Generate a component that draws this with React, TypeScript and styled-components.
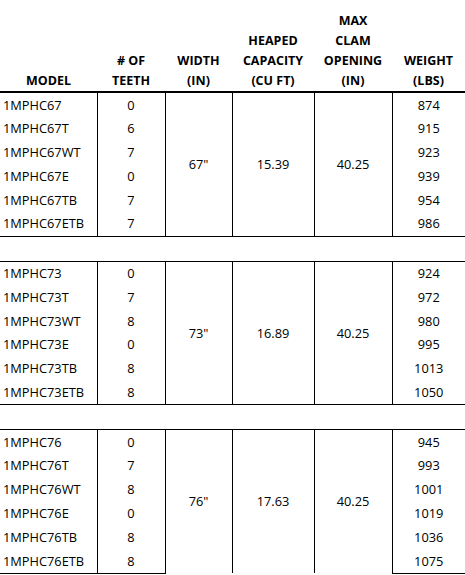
import React from 'react';
import styled, { createGlobalStyle } from 'styled-components';

/**
 * Data
 */
type Group = {
  width: string;
  capacity: string;
  opening: string;
  rows: [string, string, string][];
};

const groups: Group[] = [
  {
    width: '67"',
    capacity: '15.39',
    opening: '40.25',
    rows: [
      ['1MPHC67', '0', '874'],
      ['1MPHC67T', '6', '915'],
      ['1MPHC67WT', '7', '923'],
      ['1MPHC67E', '0', '939'],
      ['1MPHC67TB', '7', '954'],
      ['1MPHC67ETB', '7', '986'],
    ],
  },
  {
    width: '73"',
    capacity: '16.89',
    opening: '40.25',
    rows: [
      ['1MPHC73', '0', '924'],
      ['1MPHC73T', '7', '972'],
      ['1MPHC73WT', '8', '980'],
      ['1MPHC73E', '0', '995'],
      ['1MPHC73TB', '8', '1013'],
      ['1MPHC73ETB', '8', '1050'],
    ],
  },
  {
    width: '76"',
    capacity: '17.63',
    opening: '40.25',
    rows: [
      ['1MPHC76', '0', '945'],
      ['1MPHC76T', '7', '993'],
      ['1MPHC76WT', '8', '1001'],
      ['1MPHC76E', '0', '1019'],
      ['1MPHC76TB', '8', '1036'],
      ['1MPHC76ETB', '8', '1075'],
    ],
  },
];

const headers = [
  { label: ['MODEL'], width: 97 },
  { label: ['# OF', 'TEETH'], width: 68 },
  { label: ['WIDTH', '(IN)'], width: 67 },
  { label: ['HEAPED', 'CAPACITY', '(CU FT)'], width: 82 },
  { label: ['MAX', 'CLAM', 'OPENING', '(IN)'], width: 78 },
  { label: ['WEIGHT', '(LBS)'], width: 73 },
];

/**
 * Specs table
 */
const App = () => {
  return (
    <>
      <GlobalStyle />
      <Table>
        <colgroup>
          {headers.map((h, key) => (
            <col key={key} style={{ width: h.width }} />
          ))}
        </colgroup>
        <thead>
          <tr>
            {headers.map((h, key) => (
              <Th key={key}>
                {h.label.map((line, i) => (
                  <HeadLine key={i}>{line}</HeadLine>
                ))}
              </Th>
            ))}
          </tr>
        </thead>
        {groups.map((group, g) => (
          <tbody key={g}>
            {group.rows.map((row, r) => (
              <tr key={r}>
                <Td $align="left">{row[0]}</Td>
                <Td>{row[1]}</Td>
                {r === 0 && (
                  <>
                    <Td rowSpan={6}>{group.width}</Td>
                    <Td rowSpan={6}>{group.capacity}</Td>
                    <Td rowSpan={6}>{group.opening}</Td>
                  </>
                )}
                <Td>{row[2]}</Td>
              </tr>
            ))}
            {g < groups.length - 1 && (
              <tr>
                <Spacer colSpan={6} />
              </tr>
            )}
          </tbody>
        ))}
      </Table>
    </>
  );
};

/**
 * Styled Components
 */
const GlobalStyle = createGlobalStyle`
  body {
    margin: 0;
    background: #ffffff;
    font-family: 'Open Sans', 'Noto Sans', sans-serif;
    color: #000000;
  }
`;

const Table = styled.table`
  width: 465px;
  border-collapse: collapse;
  table-layout: fixed;
  font-size: 12.8px;
`;

const Th = styled.th`
  height: 91px;
  padding: 0;
  vertical-align: bottom;
  text-align: center;
  font-weight: 700;
  font-size: 12.5px;
  border-bottom: 2px solid #000;
`;

const HeadLine = styled.div`
  line-height: 20px;
`;

const Td = styled.td<{ $align?: 'left' | 'center' }>`
  height: 23.8px;
  padding: 0 0 0 ${({ $align }) => ($align === 'left' ? '3px' : '0')};
  text-align: ${({ $align }) => $align || 'center'};
  vertical-align: middle;
  border-left: 1px solid #000;
  border-right: 1px solid #000;
  border-bottom: 0;
  line-height: 1;
  white-space: nowrap;

  &:first-child {
    border-left: 0;
  }
  &:last-child {
    border-right: 0;
  }
  tr:last-child > & {
    border-bottom: 1px solid #000;
  }
`;

const Spacer = styled.td`
  height: 23.8px;
  padding: 0;
  border-top: 1px solid #000;
  border-bottom: 1px solid #000;
`;

export default App;
